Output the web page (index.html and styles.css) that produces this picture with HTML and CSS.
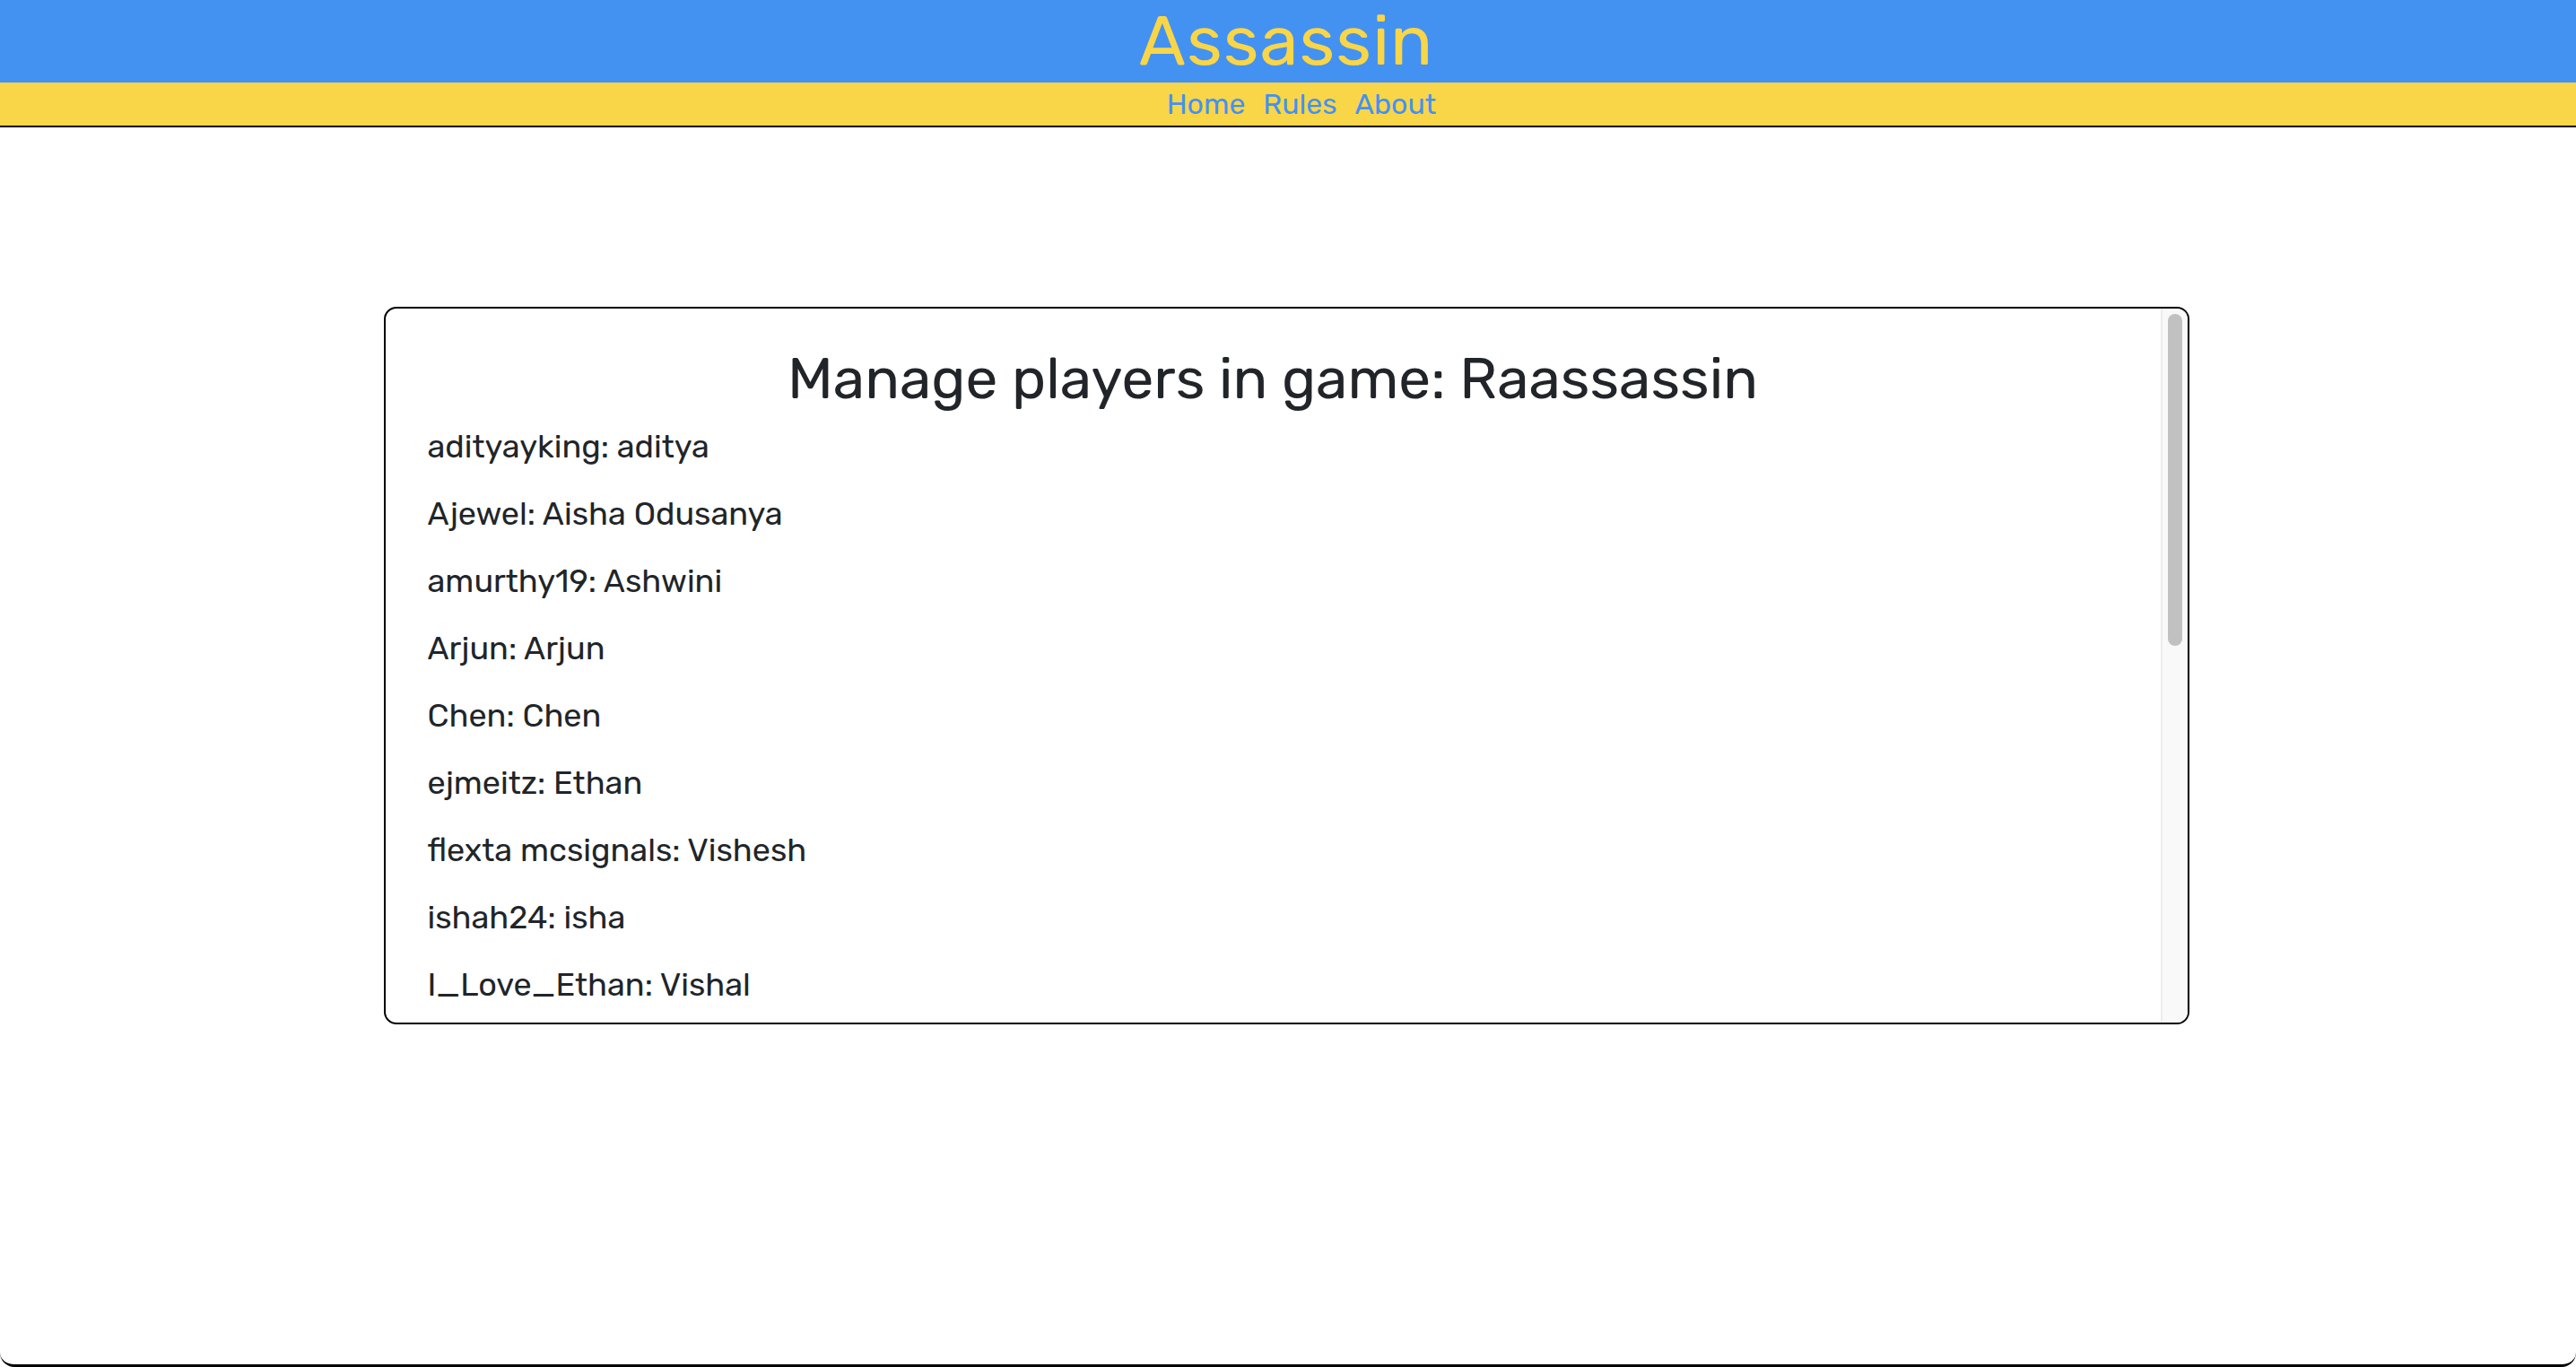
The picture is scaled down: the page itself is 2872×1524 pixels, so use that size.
FILE: index.html
```html
<!DOCTYPE html>
<html lang="en">
<head>
<meta charset="utf-8">
<title>Assassin</title>
<link rel="stylesheet" href="styles.css">
</head>
<body>
<div class="page">
  <header class="site-header">
    <h1 class="brand">Assassin</h1>
  </header>
  <nav class="site-nav">
    <a href="#">Home</a>
    <a href="#">Rules</a>
    <a href="#">About</a>
  </nav>
  <main class="content">
    <section class="card">
      <div class="card-body">
        <h2 class="card-title">Manage players in game: Raassassin</h2>
        <ul class="players">
          <li>adityayking: aditya</li>
          <li>Ajewel: Aisha Odusanya</li>
          <li>amurthy19: Ashwini</li>
          <li>Arjun: Arjun</li>
          <li>Chen: Chen</li>
          <li>ejmeitz: Ethan</li>
          <li>flexta mcsignals: Vishesh</li>
          <li>ishah24: isha</li>
          <li>I_Love_Ethan: Vishal</li>
        </ul>
      </div>
      <div class="scroll-track" aria-hidden="true">
        <div class="scroll-thumb"></div>
      </div>
    </section>
  </main>
</div>
</body>
</html>
```
FILE: styles.css
```css
html, body {
  margin: 0;
  padding: 0;
  background: #ffffff;
}

body {
  font-family: "Rubik", "Inter", "Noto Sans", sans-serif;
  color: #212529;
}

.page {
  min-height: 100vh;
  box-sizing: border-box;
  border-bottom: 3px solid #000;
  border-radius: 0 0 16px 16px;
  overflow: hidden;
}

.site-header {
  background: #4392f2;
  height: 92px;
  display: flex;
  justify-content: center;
  align-items: center;
}

.brand {
  margin: 0 4px 0 0;
  font-size: 78px;
  font-weight: 400;
  line-height: 92px;
  color: #f9d548;
  letter-spacing: 1px;
}

.site-nav {
  background: #f9d548;
  height: 48px;
  border-bottom: 2px solid #000;
  display: flex;
  justify-content: center;
  align-items: center;
  gap: 20px;
  padding-left: 30px;
}

.site-nav a {
  color: #4392f2;
  text-decoration: none;
  font-size: 32px;
  line-height: 48px;
}

.content {
  padding-top: 200px;
  padding-right: 4px;
}

.card {
  width: 2013px;
  height: 800px;
  margin: 0 auto;
  border: 2px solid #000;
  border-radius: 14px;
  overflow: hidden;
  box-sizing: border-box;
  display: flex;
}

.card-body {
  flex: 1;
  overflow: hidden;
  padding-top: 40px;
}

.scroll-track {
  width: 30px;
  flex: none;
  box-sizing: border-box;
  background: #f9f9f9;
  border-left: 2px solid #ececec;
  padding: 6px 6px 0 6px;
}

.scroll-thumb {
  height: 370px;
  background: #c1c1c1;
  border-radius: 8px;
}

.card-title {
  margin: 0;
  text-align: center;
  font-size: 64px;
  font-weight: 400;
  line-height: 77px;
  color: #212529;
}

.players {
  list-style: none;
  margin: 13px 0 0 0;
  padding: 0 0 20px 47px;
  display: flex;
  flex-direction: column;
  gap: 27px;
}

.players li {
  font-size: 36px;
  line-height: 48px;
}
```
